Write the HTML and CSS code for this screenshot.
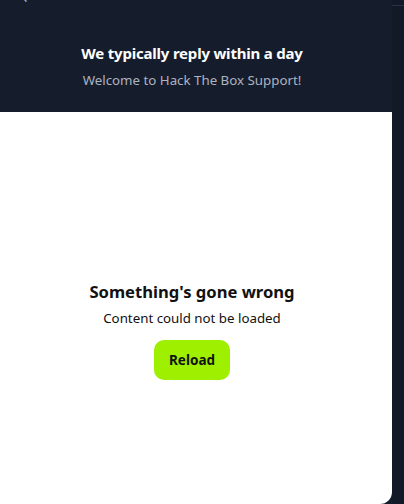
FILE: index.html
```html
<!DOCTYPE html>
<html lang="en">
<head>
    <meta charset="UTF-8">
    <meta name="viewport" content="width=device-width, initial-scale=1.0">
    <title>HTB Support</title>
    <link rel="stylesheet" href="styles.css">
</head>
<body>
    <div class="frame">
        <div class="messenger">
            <div class="top-bar">
                <span class="back">&#8249;</span>
                <span class="top-title">HTB Labs</span>
            </div>
            <div class="intro">
                <h1>We typically reply within a day</h1>
                <p>Welcome to Hack The Box Support!</p>
            </div>
            <div class="panel">
                <div class="error-box">
                    <h2>Something's gone wrong</h2>
                    <p>Content could not be loaded</p>
                    <button class="reload">Reload</button>
                </div>
            </div>
        </div>
        <div class="scroll-strip">
            <div class="strip-line"></div>
        </div>
    </div>
</body>
</html>
```

FILE: styles.css
```css
body {
    margin: 0;
    padding: 0;
    background: #151d2c;
    font-family: "Noto Sans", "Open Sans", sans-serif;
    height: 504px;
    overflow: hidden;
}
.frame {
    display: flex;
    height: 504px;
}
.messenger {
    width: 392px;
    display: flex;
    flex-direction: column;
}
.top-bar {
    height: 24px;
    margin-top: -18px;
    display: flex;
    align-items: center;
    justify-content: center;
    position: relative;
    color: #ffffff;
}
.back {
    position: absolute;
    left: 22px;
    top: 2px;
    color: #a4b1cd;
    font-size: 18px;
}
.top-title {
    font-size: 16px;
    font-weight: bold;
    padding-right: 8px;
}
.intro {
    height: 106px;
    display: flex;
    flex-direction: column;
    align-items: center;
    box-sizing: border-box;
    padding: 36px 8px 0 0;
    color: #ffffff;
}
.intro h1 {
    margin: 0;
    font-size: 15px;
    letter-spacing: -0.2px;
    font-weight: bold;
    line-height: 22px;
}
.intro p {
    margin: 7px 0 0;
    font-size: 13.3px;
    color: #adb3c0;
}
.panel {
    flex: 1;
    background: #ffffff;
    border-bottom-right-radius: 12px;
    display: flex;
    align-items: center;
    justify-content: center;
    padding-right: 8px;
}
.error-box {
    display: flex;
    flex-direction: column;
    align-items: center;
    margin-top: 46px;
}
.error-box h2 {
    margin: 0;
    font-size: 16.6px;
    font-weight: bold;
    color: #111111;
    line-height: 20px;
}
.error-box p {
    margin: 7px 0 0;
    font-size: 13.3px;
    color: #111111;
}
.reload {
    margin-top: 13px;
    width: 76px;
    height: 40px;
    border: none;
    border-radius: 10px;
    background: #9fef00;
    color: #111111;
    font-family: inherit;
    font-size: 13.5px;
    font-weight: bold;
    cursor: pointer;
}
.scroll-strip {
    width: 12px;
    background: #121a27;
}
.strip-line {
    margin-top: 5px;
    height: 1px;
    background: #2a3344;
}
```
